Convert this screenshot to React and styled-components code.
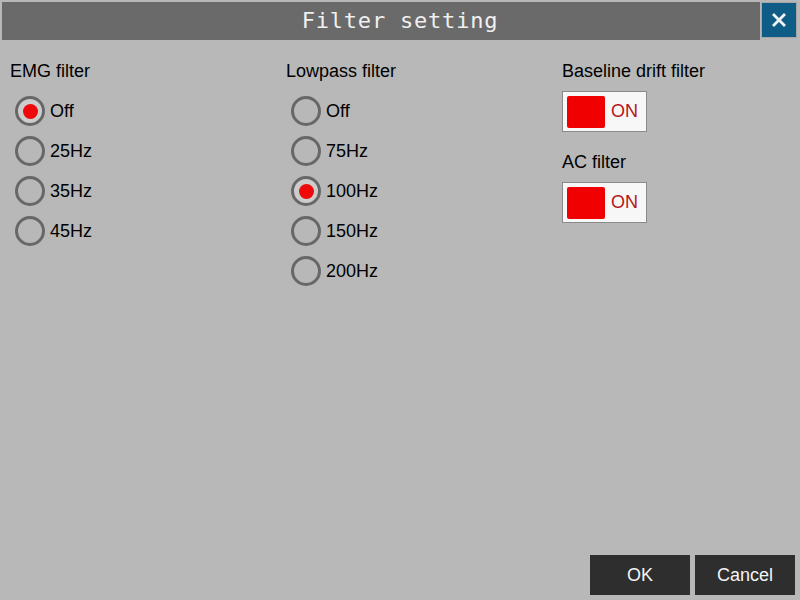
import React, { useState } from "react";
import styled, { createGlobalStyle } from "styled-components";

const GlobalStyle = createGlobalStyle`
  html, body {
    margin: 0;
    padding: 0;
    background: #b8b8b8;
  }
  * {
    box-sizing: border-box;
  }
`;

const emgOptions = ["Off", "25Hz", "35Hz", "45Hz"];
const lowpassOptions = ["Off", "75Hz", "100Hz", "150Hz", "200Hz"];

const Radio = ({ label, checked, onSelect }) => (
  <RadioRow onClick={onSelect}>
    <Circle checked={checked}>{checked && <Dot />}</Circle>
    <RadioLabel>{label}</RadioLabel>
  </RadioRow>
);

const Toggle = ({ on, onToggle }) => (
  <ToggleBox onClick={onToggle}>
    <Knob on={on} />
    <ToggleText>{on ? "ON" : "OFF"}</ToggleText>
  </ToggleBox>
);

export default function App() {
  const [emg, setEmg] = useState("Off");
  const [lowpass, setLowpass] = useState("100Hz");
  const [baseline, setBaseline] = useState(true);
  const [ac, setAc] = useState(true);

  return (
    <Screen>
      <GlobalStyle />
      <Header>
        <TitleBar>Filter setting</TitleBar>
        <CloseButton>
          <svg width="16" height="16" viewBox="0 0 16 16">
            <path
              d="M3 3 L13 13 M13 3 L3 13"
              stroke="#f2f2f2"
              strokeWidth="2.8"
              strokeLinecap="square"
            />
          </svg>
        </CloseButton>
      </Header>

      <Body>
        <Column>
          <GroupTitle>EMG filter</GroupTitle>
          <RadioList>
            {emgOptions.map((o) => (
              <Radio
                key={o}
                label={o}
                checked={emg === o}
                onSelect={() => setEmg(o)}
              />
            ))}
          </RadioList>
        </Column>

        <Column>
          <GroupTitle>Lowpass filter</GroupTitle>
          <RadioList>
            {lowpassOptions.map((o) => (
              <Radio
                key={o}
                label={o}
                checked={lowpass === o}
                onSelect={() => setLowpass(o)}
              />
            ))}
          </RadioList>
        </Column>

        <Column>
          <GroupTitle>Baseline drift filter</GroupTitle>
          <Toggle on={baseline} onToggle={() => setBaseline(!baseline)} />
          <GroupTitle spaced>AC filter</GroupTitle>
          <Toggle on={ac} onToggle={() => setAc(!ac)} />
        </Column>
      </Body>

      <Footer>
        <ActionButton>OK</ActionButton>
        <ActionButton>Cancel</ActionButton>
      </Footer>
    </Screen>
  );
}

const Screen = styled.div`
  width: 800px;
  height: 600px;
  background: #b8b8b8;
  display: flex;
  flex-direction: column;
  font-family: "Liberation Sans", Arial, sans-serif;
  color: #000;
  overflow: hidden;
`;

const Header = styled.div`
  display: flex;
  align-items: flex-start;
  padding: 2px 3px 0 2px;
`;

const TitleBar = styled.div`
  flex: 1;
  height: 38px;
  background: #6a6a6a;
  color: #f0f0f0;
  font-family: "DejaVu Sans Mono", monospace;
  font-size: 22px;
  letter-spacing: 0.8px;
  display: flex;
  align-items: center;
  justify-content: center;
  padding: 0 0 2px 38px;
`;

const CloseButton = styled.div`
  width: 36px;
  height: 36px;
  margin-left: 1px;
  background: #0f5c86;
  border: 1px solid #a6a6a6;
  display: flex;
  align-items: center;
  justify-content: center;
`;

const Body = styled.div`
  flex: 1;
  display: grid;
  grid-template-columns: 276px 276px 1fr;
  padding: 21px 0 0 10px;
`;

const Column = styled.div`
  display: flex;
  flex-direction: column;
  align-items: flex-start;
`;

const GroupTitle = styled.div`
  font-size: 18px;
  line-height: 20px;
  height: 20px;
  margin-top: ${({ spaced }) => (spaced ? "20px" : "0")};
  margin-bottom: 10px;
`;

const RadioList = styled.div`
  display: flex;
  flex-direction: column;
`;

const RadioRow = styled.div`
  height: 40px;
  display: flex;
  align-items: center;
  gap: 5px;
  padding-left: 5px;
  cursor: pointer;
`;

const Circle = styled.div`
  width: 30px;
  height: 30px;
  border-radius: 50%;
  border: 3px solid #676767;
  background: ${({ checked }) => (checked ? "#cdcdcd" : "transparent")};
  display: flex;
  align-items: center;
  justify-content: center;
`;

const Dot = styled.div`
  width: 15px;
  height: 15px;
  border-radius: 50%;
  background: #ee0a0a;
`;

const RadioLabel = styled.span`
  font-size: 18px;
`;

const ToggleBox = styled.div`
  width: 85px;
  height: 41px;
  background: #f7f7f7;
  border: 1px solid #8a8a8a;
  display: flex;
  align-items: center;
  padding: 0 4px;
  gap: 6px;
  cursor: pointer;
`;

const Knob = styled.div`
  width: 38px;
  height: 32px;
  border-radius: 2px;
  background: ${({ on }) => (on ? "#f00000" : "#888")};
`;

const ToggleText = styled.span`
  font-size: 18px;
  color: #b8141a;
`;

const Footer = styled.div`
  display: flex;
  justify-content: flex-end;
  gap: 5px;
  padding: 0 5px 5px 0;
`;

const ActionButton = styled.div`
  width: 100px;
  height: 40px;
  background: #2e2e2e;
  color: #f4f4f4;
  font-size: 18px;
  display: flex;
  align-items: center;
  justify-content: center;
`;
